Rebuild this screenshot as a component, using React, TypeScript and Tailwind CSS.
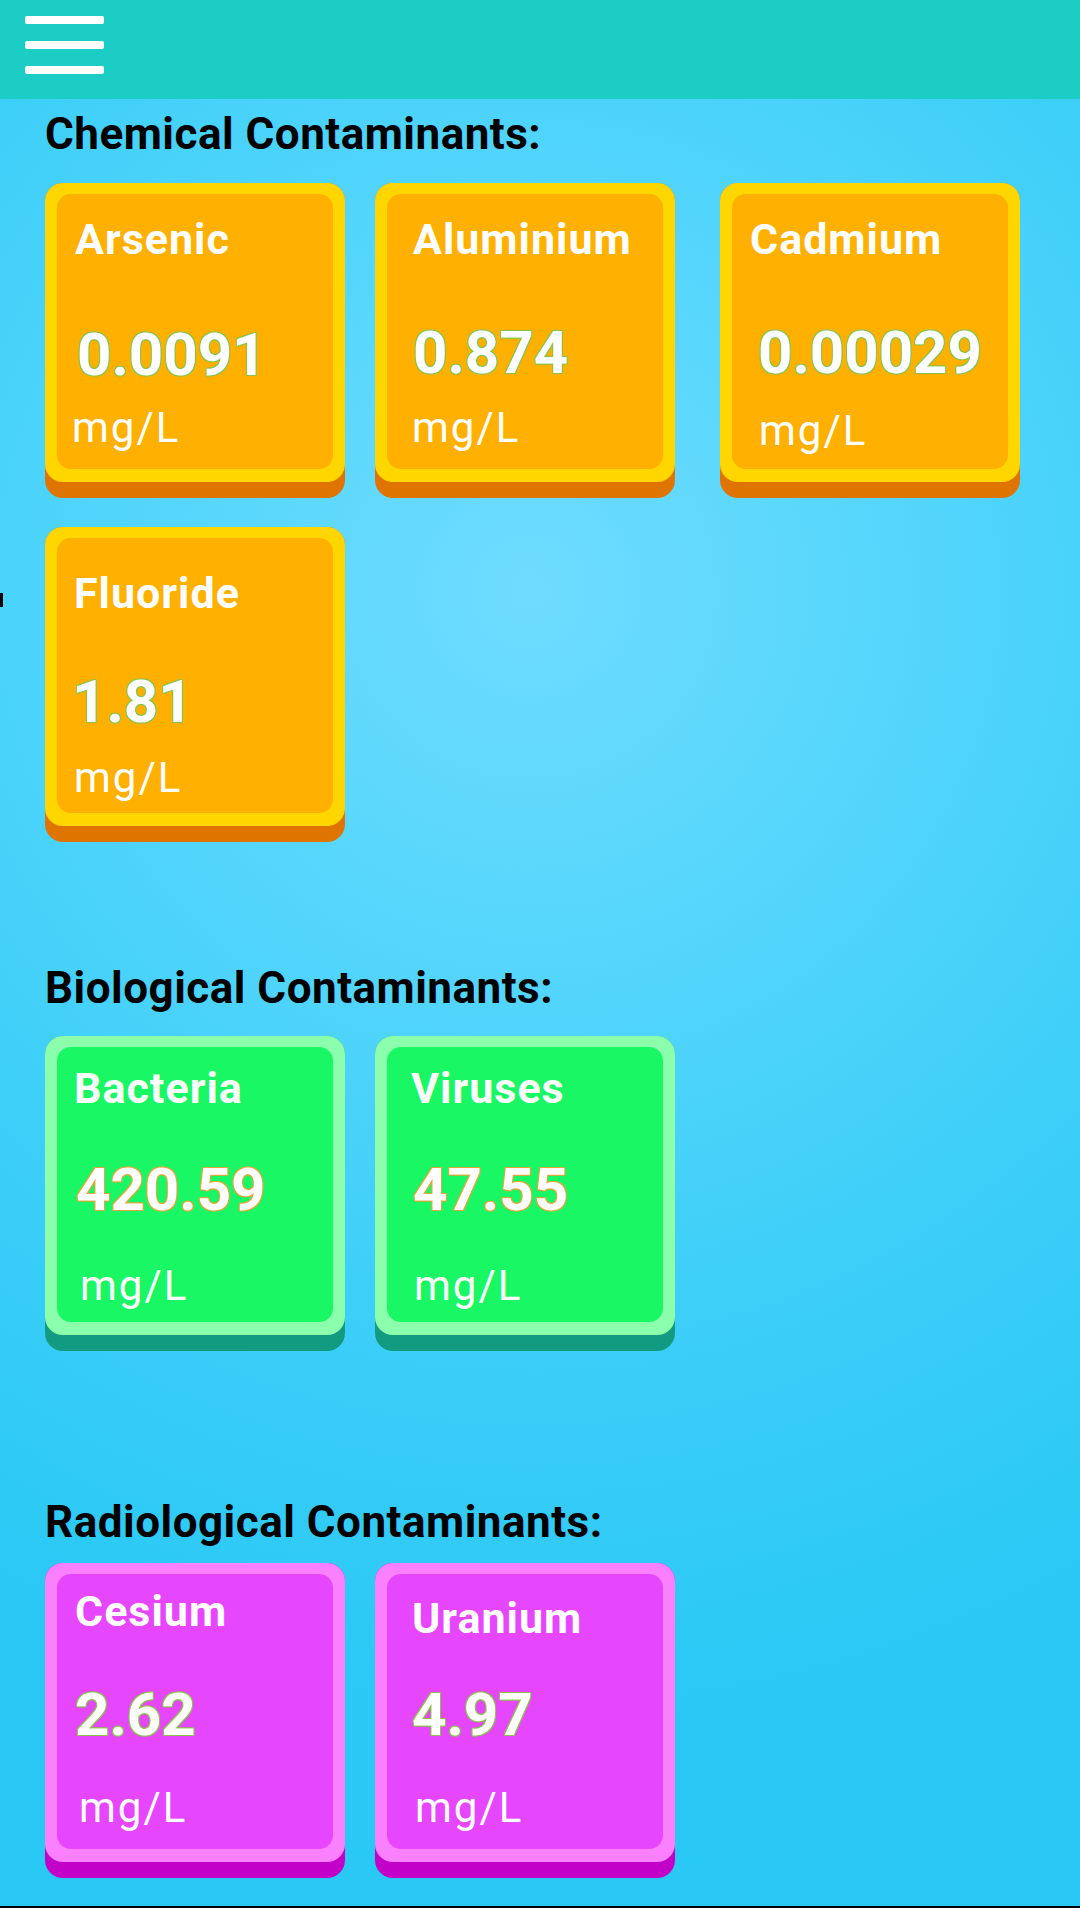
import React from 'react';

type Tone = 'orange' | 'green' | 'pink';

interface Reading {
  name: string;
  value: string;
  tone: Tone;
  nameCls: string;
  valueCls: string;
  unitCls: string;
}

// rim / face / bottom-edge colours per group
const toneCls: Record<Tone, { base: string; rim: string; face: string; glow: string }> = {
  orange: {
    base: 'bg-[#e07400]',
    rim: 'bg-[#ffd600]',
    face: 'bg-[#ffb000]',
    glow: '[text-shadow:1px_1px_0_#8bc34a,-1px_-1px_0_#8bc34a,1px_-1px_0_#8bc34a,-1px_1px_0_#8bc34a]',
  },
  green: {
    base: 'bg-[#129b80]',
    rim: 'bg-[#8cffad]',
    face: 'bg-[#1af764]',
    glow: '[text-shadow:1px_1px_0_#e0a83a,-1px_-1px_0_#e0a83a,1px_-1px_0_#e0a83a,-1px_1px_0_#e0a83a]',
  },
  pink: {
    base: 'bg-[#c300c8]',
    rim: 'bg-[#fb80fd]',
    face: 'bg-[#e646fd]',
    glow: '[text-shadow:1px_1px_0_#8bc34a,-1px_-1px_0_#8bc34a,1px_-1px_0_#8bc34a,-1px_1px_0_#8bc34a]',
  },
};

const chemical: Reading[] = [
  { name: 'Arsenic', value: '0.0091', tone: 'orange', nameCls: 'mt-[24px] ml-[18px]', valueCls: 'mt-[65px] ml-[20px]', unitCls: 'mt-[24px] ml-[15px]' },
  { name: 'Aluminium', value: '0.874', tone: 'orange', nameCls: 'mt-[24px] ml-[26px]', valueCls: 'mt-[63px] ml-[26px]', unitCls: 'mt-[26px] ml-[25px]' },
  { name: 'Cadmium', value: '0.00029', tone: 'orange', nameCls: 'mt-[24px] ml-[18px]', valueCls: 'mt-[63px] ml-[26px]', unitCls: 'mt-[29px] ml-[27px]' },
  { name: 'Fluoride', value: '1.81', tone: 'orange', nameCls: 'mt-[34px] ml-[17px]', valueCls: 'mt-[58px] ml-[15px]', unitCls: 'mt-[27px] ml-[17px]' },
];

const biological: Reading[] = [
  { name: 'Bacteria', value: '420.59', tone: 'green', nameCls: 'mt-[20px] ml-[17px]', valueCls: 'mt-[51px] ml-[19px]', unitCls: 'mt-[47px] ml-[23px]' },
  { name: 'Viruses', value: '47.55', tone: 'green', nameCls: 'mt-[20px] ml-[24px]', valueCls: 'mt-[51px] ml-[26px]', unitCls: 'mt-[47px] ml-[27px]' },
];

const radiological: Reading[] = [
  { name: 'Cesium', value: '2.62', tone: 'pink', nameCls: 'mt-[16px] ml-[18px]', valueCls: 'mt-[53px] ml-[18px]', unitCls: 'mt-[44px] ml-[22px]' },
  { name: 'Uranium', value: '4.97', tone: 'pink', nameCls: 'mt-[23px] ml-[25px]', valueCls: 'mt-[46px] ml-[25px]', unitCls: 'mt-[44px] ml-[28px]' },
];

const ReadingCard = ({ r }: { r: Reading }) => {
  const t = toneCls[r.tone];
  return (
    <div className={`w-[300px] rounded-[18px] pb-[16px] ${t.base}`}>
      <div className={`rounded-[18px] pt-[11px] pb-[13px] px-[12px] ${t.rim}`}>
        <div className={`h-[275px] rounded-[14px] flex flex-col items-start text-white ${t.face}`}>
          <span className={`text-[43px] leading-[42px] font-bold tracking-[1px] ${r.nameCls}`}>{r.name}</span>
          <span className={`text-[60px] leading-[60px] font-bold ${t.glow} ${r.valueCls}`}>{r.value}</span>
          <span className={`text-[42px] leading-[38px] tracking-[2px] ${r.unitCls}`}>mg/L</span>
        </div>
      </div>
    </div>
  );
};

const SectionTitle = ({ children, className }: { children: React.ReactNode; className: string }) => (
  <h2 className={`text-[44px] leading-[48px] font-bold tracking-[0.5px] text-black ${className}`}>{children}</h2>
);

export default function App() {
  return (
    <div className="relative h-[1908px] w-full overflow-hidden border-b-2 border-black bg-[radial-gradient(circle_at_49%_31%,#6edcfe_0%,#56d6fc_25%,#3ecff8_50%,#29c8f5_80%)] [font-family:Roboto,'Liberation_Sans',sans-serif]">
      {/* top bar */}
      <div className="h-[99px] bg-[#1bcdc5] pl-[25px] pt-[16px]">
        <div className="flex flex-col gap-[17px] w-[79px]">
          <span className="h-[8px] rounded-[2px] bg-white" />
          <span className="h-[8px] rounded-[2px] bg-white" />
          <span className="h-[8px] rounded-[2px] bg-white" />
        </div>
      </div>

      {/* stray edge mark from the original capture */}
      <span className="absolute left-0 top-[593px] h-[14px] w-[3px] bg-black" />

      <div className="px-[45px] pt-[11px]">
        <SectionTitle className="">Chemical Contaminants:</SectionTitle>
        <div className="mt-[25px] grid grid-cols-[330px_345px_300px] gap-y-[29px]">
          {chemical.map(r => <ReadingCard key={r.name} r={r} />)}
        </div>

        <SectionTitle className="mt-[122px]">Biological Contaminants:</SectionTitle>
        <div className="mt-[24px] grid grid-cols-[330px_300px]">
          {biological.map(r => <ReadingCard key={r.name} r={r} />)}
        </div>

        <SectionTitle className="mt-[147px]">Radiological Contaminants:</SectionTitle>
        <div className="mt-[17px] grid grid-cols-[330px_300px]">
          {radiological.map(r => <ReadingCard key={r.name} r={r} />)}
        </div>
      </div>
    </div>
  );
}
